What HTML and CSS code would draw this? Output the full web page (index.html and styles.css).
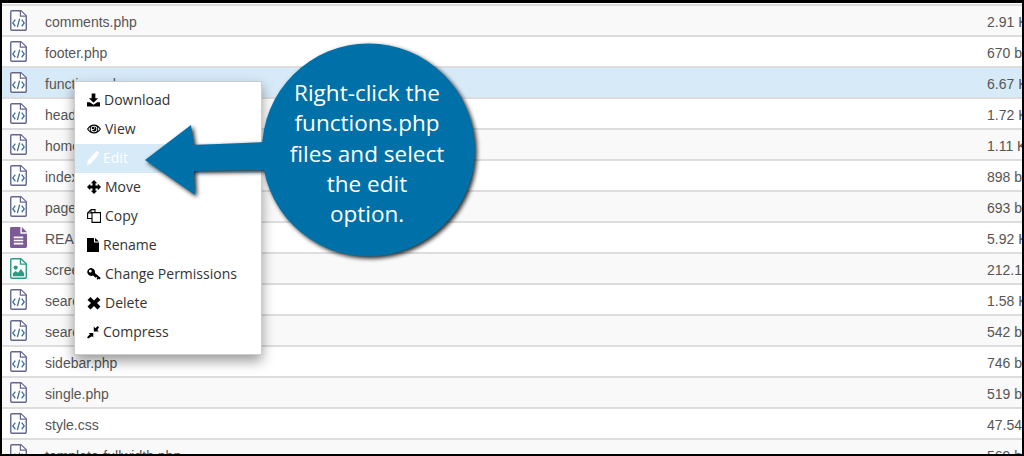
FILE: index.html
```html
<!DOCTYPE html>
<html lang="en">
<head>
  <meta charset="UTF-8" />
  <title>File Manager</title>
  <link rel="stylesheet" href="styles.css">
</head>
<body>
  <svg class="sprites" width="0" height="0">
    <symbol id="file-code" viewBox="0 0 18 22" preserveAspectRatio="none">
      <path d="M2 .8h9.500l5.700 5.200V20a1.200 1.200 0 0 1-1.200 1.200H2A1.200 1.200 0 0 1 .8 20V2A1.200 1.200 0 0 1 2 .8z" fill="#fff" stroke="#66678f" stroke-width="1.500"/>
      <path d="M11 1v5.500h6" fill="#fff" stroke="#66678f" stroke-width="1.300"/>
      <path d="M5.600 10 3 13.500 5.600 17M12.400 10 15 13.500 12.400 17M10.200 9 7.800 18" fill="none" stroke="#3f6f96" stroke-width="1.400"/>
    </symbol>
    <symbol id="file-text" viewBox="0 0 18 22" preserveAspectRatio="none">
      <path d="M1.500 0H11v7h7v13.500a1.500 1.500 0 0 1-1.500 1.500h-15A1.500 1.500 0 0 1 0 20.500V1.500A1.500 1.500 0 0 1 1.500 0zM12.500 0 18 5.500h-5.500z" fill="#7b5a96"/>
      <path d="M4 10h10v1.700H4zM4 13.300h10V15H4zM4 16.600h10v1.700H4z" fill="#fff"/>
    </symbol>
    <symbol id="file-image" viewBox="0 0 18 22" preserveAspectRatio="none">
      <path d="M2 .8h9.500l5.700 5.200V20a1.200 1.200 0 0 1-1.200 1.200H2A1.200 1.200 0 0 1 .8 20V2A1.200 1.200 0 0 1 2 .8z" fill="#fff" stroke="#2a9c86" stroke-width="1.500"/>
      <path d="M11 1v5.500h6" fill="none" stroke="#2a9c86" stroke-width="1.300"/>
      <circle cx="6" cy="10" r="2.200" fill="#2a9c86"/>
      <path d="M3 19v-3l3-2.500 2.500 2 3-4 3.500 4.500v3z" fill="#2a9c86"/>
    </symbol>
  </svg>

  <div class="screen">
    <div class="file-list">
      <div class="file-row"><svg class="file-icon"><use href="#file-code"/></svg><span class="file-name">comments.php</span><span class="file-size">2.91 KB</span></div>
      <div class="file-row"><svg class="file-icon"><use href="#file-code"/></svg><span class="file-name">footer.php</span><span class="file-size">670 bytes</span></div>
      <div class="file-row selected"><svg class="file-icon"><use href="#file-code"/></svg><span class="file-name">functions.php</span><span class="file-size">6.67 KB</span></div>
      <div class="file-row"><svg class="file-icon"><use href="#file-code"/></svg><span class="file-name">header.php</span><span class="file-size">1.72 KB</span></div>
      <div class="file-row"><svg class="file-icon"><use href="#file-code"/></svg><span class="file-name">home.php</span><span class="file-size">1.11 KB</span></div>
      <div class="file-row"><svg class="file-icon"><use href="#file-code"/></svg><span class="file-name">index.php</span><span class="file-size">898 bytes</span></div>
      <div class="file-row"><svg class="file-icon"><use href="#file-code"/></svg><span class="file-name">page.php</span><span class="file-size">693 bytes</span></div>
      <div class="file-row"><svg class="file-icon"><use href="#file-text"/></svg><span class="file-name">README.md</span><span class="file-size">5.92 KB</span></div>
      <div class="file-row"><svg class="file-icon"><use href="#file-image"/></svg><span class="file-name">screenshot.png</span><span class="file-size">212.1 KB</span></div>
      <div class="file-row"><svg class="file-icon"><use href="#file-code"/></svg><span class="file-name">search.php</span><span class="file-size">1.58 KB</span></div>
      <div class="file-row"><svg class="file-icon"><use href="#file-code"/></svg><span class="file-name">searchform.php</span><span class="file-size">542 bytes</span></div>
      <div class="file-row"><svg class="file-icon"><use href="#file-code"/></svg><span class="file-name">sidebar.php</span><span class="file-size">746 bytes</span></div>
      <div class="file-row"><svg class="file-icon"><use href="#file-code"/></svg><span class="file-name">single.php</span><span class="file-size">519 bytes</span></div>
      <div class="file-row"><svg class="file-icon"><use href="#file-code"/></svg><span class="file-name">style.css</span><span class="file-size">47.54 KB</span></div>
      <div class="file-row"><svg class="file-icon"><use href="#file-code"/></svg><span class="file-name">template-fullwidth.php</span><span class="file-size">569 bytes</span></div>
    </div>

    <!-- context menu -->
    <ul class="context-menu">
      <li class="menu-item">
        <svg class="menu-icon dl" viewBox="0 0 14 14"><path d="M5 0h4v5h3L7 10 2 5h3zM0 9.500h3L7 12l4-2.500h3V14H0z"/></svg>
        <span>Download</span>
      </li>
      <li class="menu-item">
        <svg class="menu-icon" viewBox="0 0 14 14"><path fill-rule="evenodd" d="M7 2.500c3 0 5.500 1.900 7 4.500-1.500 2.600-4 4.500-7 4.500S1.500 9.600 0 7c1.500-2.600 4-4.500 7-4.500zM7 3.700a3.300 3.300 0 1 0 0 6.600 3.300 3.300 0 0 0 0-6.600zM3.300 5C2.500 5.500 1.800 6.200 1.300 7c.6.900 1.300 1.600 2 2.100-.7-1.300-.7-2.900 0-4.100zm7.400 0c.7 1.200.7 2.800 0 4.100.7-.5 1.400-1.200 2-2.100-.5-.8-1.200-1.500-2-2z"/><circle cx="6" cy="6" r="1.300"/><path d="M7 4.500a2.500 2.500 0 1 1-2.400 3.200A2 2 0 0 0 7 4.500z"/></svg>
        <span>View</span>
      </li>
      <li class="menu-item active">
        <svg class="menu-icon narrow" viewBox="0 0 12 14"><path d="M8 1.500l3 2.800L4 12.500 0 14l.8-4.500zM9 .4c.4-.5 1-.5 1.400-.1l1.300 1.200c.4.400.4 1 0 1.400l-.7.8-2.900-2.700z"/></svg>
        <span>Edit</span>
      </li>
      <li class="menu-item">
        <svg class="menu-icon" viewBox="0 0 14 14"><path d="M7 0l3.200 3.200H8.500v2.300h2.300V3.800L14 7l-3.200 3.200V8.500H8.500v2.300h1.700L7 14l-3.200-3.200h1.700V8.500H3.200v1.700L0 7l3.200-3.200v1.700h2.300V3.200H3.800z"/></svg>
        <span>Move</span>
      </li>
      <li class="menu-item">
        <svg class="menu-icon" viewBox="0 0 14 14"><path d="M4 .6h4v3M4 .6.6 4v5.500h4.400M4 .9V4H.6M5 3.600h4.500L13.500 3.600V13.400H5z" fill="none" stroke="#000" stroke-width="1.100"/></svg>
        <span>Copy</span>
      </li>
      <li class="menu-item">
        <svg class="menu-icon narrow" viewBox="0 0 12 14"><path d="M0 0h7v4.500h5V14H0zM8 0l4 3.500H8z"/></svg>
        <span>Rename</span>
      </li>
      <li class="menu-item">
        <svg class="menu-icon" viewBox="0 0 14 14"><path fill-rule="evenodd" d="M4 1a4 4 0 0 1 3.900 4.900l5.900 5-1.300 1.700-1-.9-.9 1-1-.9.800-1-.9-.8-.9.800-2.600-2.200A4 4 0 1 1 4 1zM3.300 2.800a1.400 1.400 0 1 0 0 2.800 1.400 1.400 0 0 0 0-2.800z"/></svg>
        <span>Change Permissions</span>
      </li>
      <li class="menu-item">
        <svg class="menu-icon" viewBox="0 0 14 14"><path d="M3.500 1 7 4.500 10.500 1 13.500 4 10 7l3.500 3.500-3 3L7 10l-3.500 3.500-3-3L4 7 .5 4z"/></svg>
        <span>Delete</span>
      </li>
      <li class="menu-item">
        <svg class="menu-icon narrow" viewBox="0 0 12 14"><path d="M1.200 13.500 0 12.300 3 9.300 1.700 8H6.300v4.600L5 11.200zM6.800 1.500v5h5L10.300 5l1.700-2.700L10.800 1 8.300 3.200z"/></svg>
        <span>Compress</span>
      </li>
    </ul>

    <!-- callout over the menu -->
    <div class="callout">
      <svg class="callout-shape" viewBox="0 0 340 224" width="340" height="224">
        <path d="M5 120 51 85l3 20 72-3v28l-72 1 1 24z" fill="#0070a8"/>
        <circle cx="228.500" cy="110" r="106.500" fill="#0070a8"/>
      </svg>
      <p class="callout-text">Right-click the<br>functions.php<br>files and select<br>the edit<br>option.</p>
    </div>
  </div>
</body>
</html>
```

FILE: styles.css
```css
* {
  margin: 0;
  padding: 0;
  box-sizing: border-box;
}

body {
  background: #000;
  width: 1024px;
  height: 456px;
  overflow: hidden;
}

.sprites {
  display: block;
  height: 0;
}

.screen {
  position: relative;
  width: 1020px;
  height: 451px;
  margin: 3px 2px 2px;
  overflow: hidden;
  background: #fff;
  font-family: "Liberation Sans", Arial, sans-serif;
}

.file-list {
  padding-top: 1px;
}

.file-row {
  display: flex;
  align-items: center;
  height: 31px;
  background: #fff;
  border-top: 2px solid #ddd;
  color: #555;
  font-size: 14px;
  white-space: nowrap;
}

.file-row:nth-child(odd) {
  background: #f9f9f9;
}

.file-row.selected {
  background: #d6eaf8;
}

.file-icon {
  width: 17px;
  height: 21px;
  margin-left: 8px;
  flex: none;
}

.file-name {
  margin-left: 18px;
  padding-top: 2px;
  flex: 1;
}

.file-size {
  width: 35px;
  padding-top: 2px;
  overflow: hidden;
  flex: none;
}

.context-menu {
  position: absolute;
  left: 72px;
  top: 78px;
  width: 188px;
  height: 274px;
  padding-top: 4px;
  list-style: none;
  background: #fff;
  border: 1px solid #ccc;
  box-shadow: 0 6px 12px rgba(0, 0, 0, 0.4);
  font-family: "Open Sans", sans-serif;
  font-size: 14px;
  color: #333;
}

.menu-item {
  display: flex;
  align-items: center;
  gap: 4px;
  height: 29px;
  padding: 0 0 2px 12px;
}

.menu-item.active {
  background: #d6eaf8;
  color: #fff;
}

.menu-icon {
  width: 14px;
  height: 14px;
  fill: #000;
  flex: none;
}

.menu-icon.dl {
  width: 13px;
}

.menu-icon.narrow {
  width: 12px;
}

.menu-item.active .menu-icon {
  fill: #fff;
}

.callout {
  position: absolute;
  left: 138px;
  top: 37px;
  width: 340px;
  height: 224px;
}

.callout-shape {
  position: absolute;
  left: 0;
  top: 0;
  overflow: visible;
  filter: drop-shadow(2px 2px 2px rgba(0, 0, 0, 0.85));
}

.callout-text {
  position: absolute;
  left: 146px;
  top: 38px;
  width: 162px;
  color: #fff;
  font-family: "Open Sans", sans-serif;
  font-size: 22.500px;
  line-height: 30.300px;
  text-align: center;
}
```
